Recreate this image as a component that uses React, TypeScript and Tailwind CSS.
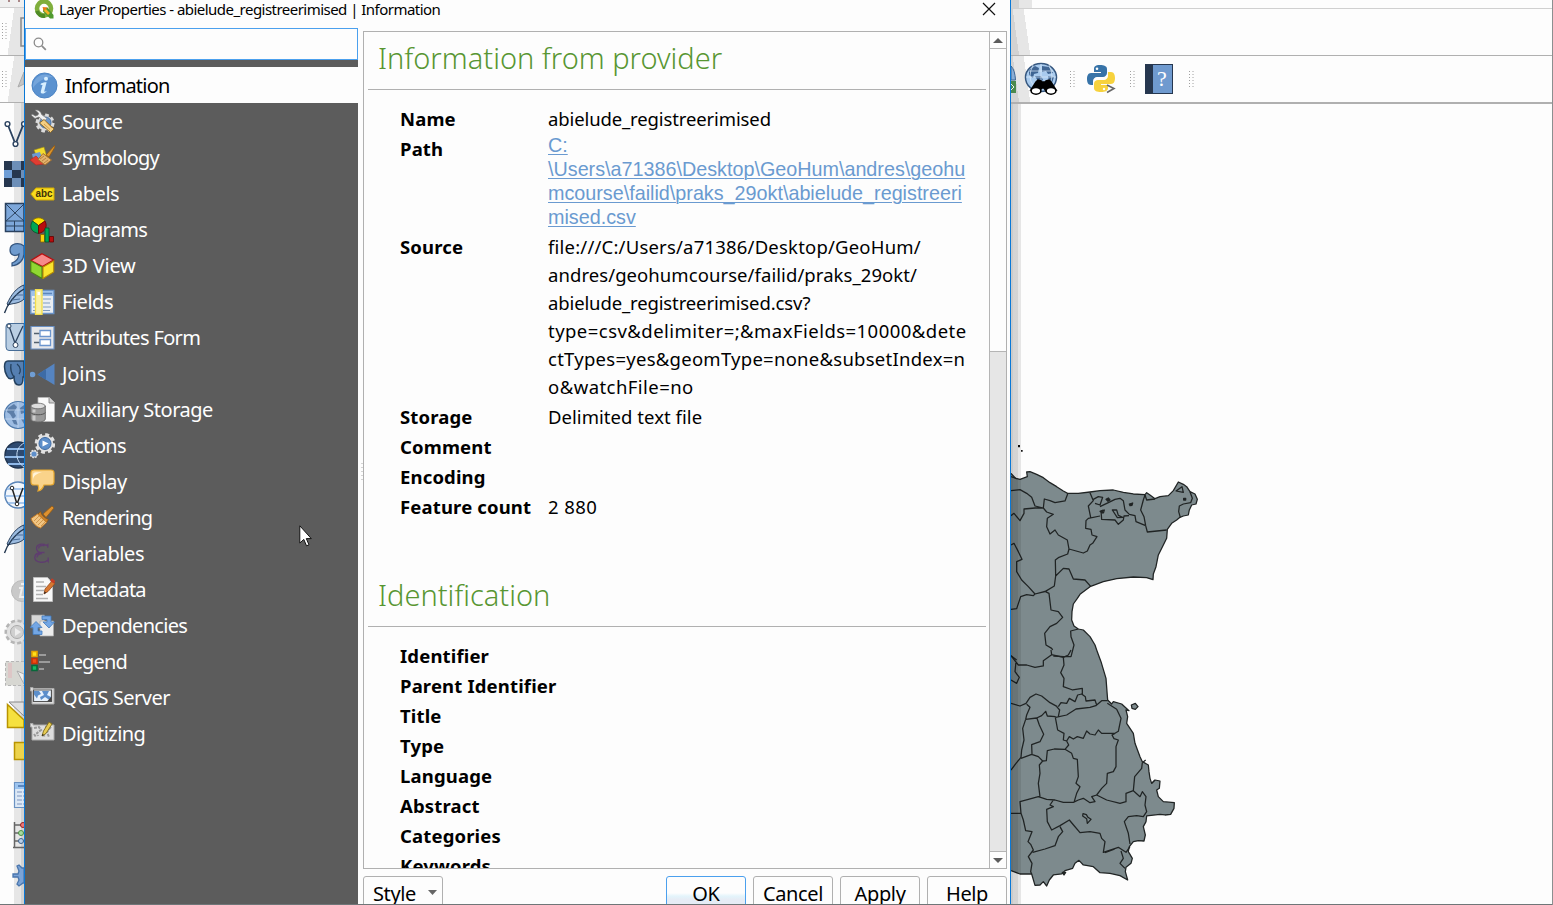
import type { ReactNode } from "react";

/* ---------- sidebar icons ---------- */

const Svg = ({ children, wide }: { children: ReactNode; wide?: boolean }) => (
  <svg viewBox={wide ? "0 0 27 27" : "0 0 25 26"} className={wide ? "h-[27px] w-[27px] shrink-0" : "h-[26px] w-[25px] shrink-0"}>
    {children}
  </svg>
);

const Gear = ({ cx, cy, r, fill = "#e2e2e2", stroke = "#999" }: { cx: number; cy: number; r: number; fill?: string; stroke?: string }) => (
  <g>
    <circle cx={cx} cy={cy} r={r} fill="none" stroke={stroke} strokeWidth={r * 0.5} strokeDasharray={`${r * 0.42} ${r * 0.365}`} />
    <circle cx={cx} cy={cy} r={r * 0.9} fill={fill} stroke={fill} strokeWidth={r * 0.2} />
    <circle cx={cx} cy={cy} r={r * 1.02} fill="none" stroke={fill} strokeWidth={r * 0.42} strokeDasharray={`${r * 0.44} ${r * 0.361}`} />
  </g>
);

const icons: Record<string, ReactNode> = {
  Information: (
    <Svg wide>
      <circle cx="13.5" cy="13.5" r="12.5" fill="#5b92d0" stroke="#4a83c4" />
      <path d="M2 13C3 4 14-1 22 5 14 5 6 10 2 16Z" fill="#8ab4e3" opacity=".55" />
      <circle cx="15" cy="6.8" r="2" fill="#d8efff" />
      <path d="M10 11.5c2-1 4-1.400 5.600-1.300L13.300 19c-.2 1 .8.8 2.500-.3-1 2-3 3-4.700 2.800-1.300-.2-1.600-1.200-1.200-2.600l1.600-6-2-.2Z" fill="#d8efff" />
    </Svg>
  ),
  Source: (
    <Svg>
      <Gear cx={15} cy={14} r={7.6} fill="#dcdcdc" stroke="#aaa" />
      <circle cx="15.500" cy="13.500" r="5.500" fill="#6b96cc" stroke="#49709f" />
      <path d="M1.500 6.500 5 9.500 9 8 14 12.500 17 9.500 11.500 5.500C11 2 8 .5 5 1L8.500 4 8 6 5.500 7 2 5Z" fill="#f0f0f0" stroke="#777" strokeWidth=".7" />
      <path d="m9.500 14 4.500-3.500 10 9.500-3.500 3.500Z" fill="#f4cf83" stroke="#8a6522" strokeWidth=".9" />
      <path d="m14 15 6 5.500m-4-7.500 6 6" stroke="#d29e4b" />
    </Svg>
  ),
  Symbology: (
    <Svg>
      <path d="M4 5 14 2 17 12 8 15Z" fill="#f3dc2d" stroke="#9a8a12" strokeWidth=".6" />
      <path d="m2 9 8-2 3 9-9 2Z" fill="#6d9bd3" />
      <path d="m0 15 6-4 8 8-8 1Z" fill="#e03d32" stroke="#b8251e" strokeWidth=".6" />
      <path d="m16 10 8.500-9.500L25 2l-6 10Z" fill="#d9932c" stroke="#8f5813" strokeWidth=".8" />
      <path d="m13 8.500 8.500 6.500-6.500 5-7-5.500Z" fill="#e3b26d" stroke="#a4702d" />
      <path d="m14 11-4 3m6-1-4 3m6-1-4 3" stroke="#a4702d" strokeWidth=".7" />
    </Svg>
  ),
  Labels: (
    <Svg>
      <path d="M.8 13 6 7H24V19H6Z" fill="#f8dc1e" stroke="#d3aa00" />
      <text x="5.500" y="16.300" fontSize="10.500" fontWeight="700" fontFamily="'Liberation Sans'" textLength="17" lengthAdjust="spacingAndGlyphs" fill="#3d3108">abc</text>
    </Svg>
  ),
  Diagrams: (
    <Svg>
      <path d="M8.500 8.500 2.500 4C5-.2 12-.2 15 4Z" fill="#ffe000" stroke="#806b00" strokeWidth=".8" />
      <path d="M8.500 8.500 2.500 4C-1 10 1 15 8.500 16.500Z" fill="#00a653" stroke="#00512a" strokeWidth=".8" />
      <path d="M8.500 8.500 15 4C18 10 15 15 8.500 16.500Z" fill="#b80d0d" stroke="#600" strokeWidth=".8" />
      <path d="M10.500 17.500h4v7.500h-4Z" fill="#fbd30a" stroke="#8b6400" strokeWidth=".8" />
      <path d="M15 11h4v14h-4Z" fill="#00a653" stroke="#004f28" strokeWidth=".8" />
      <path d="M19.500 19.500h4V25h-4Z" fill="#b80d0d" stroke="#600" strokeWidth=".8" />
    </Svg>
  ),
  "3D View": (
    <Svg>
      <path d="M12 .7 23.500 7 12.500 13.500 1 7.500Z" fill="#f58a8a" stroke="#b90f0f" strokeWidth="1.300" />
      <path d="M.8 8 12 14V25.500L.8 19Z" fill="#8fd832" stroke="#4a8310" strokeWidth="1.100" />
      <path d="M23.700 8 13 14V25.500L23.700 19Z" fill="#f9e42f" stroke="#b88c00" strokeWidth="1.100" />
    </Svg>
  ),
  Fields: (
    <Svg>
      <path d="M.8 1.500h23V24.500H.8Z" fill="#e9eef4" stroke="#6993c9" strokeWidth="1.400" />
      <path d="M1.500 2h21.700v5H1.500Z" fill="#9dc1ec" />
      <path d="M13 4.500h9" stroke="#5b86bd" strokeWidth="1.500" />
      <path d="M3 10h2m-2 4h2m-2 4h2m-2 3.500h2M13 10h8m-8 4h7m-7 4h8m-8 3.500h7" stroke="#7f9bc0" strokeWidth="1.200" />
      <path d="M5.500.7H12V25.300H5.500Z" fill="#faf1a5" stroke="#f3dd4b" strokeWidth="1.300" />
      <path d="M7.500 3h2.500v3H7.500Z" fill="#fff" />
    </Svg>
  ),
  "Attributes Form": (
    <Svg>
      <path d="M1 1.500h23V24H1Z" fill="#e6e7ea" stroke="#6a90c4" strokeWidth="1.200" />
      <path d="M4 8.500h5.500M4 17.500h5.500" stroke="#53616f" strokeWidth="1.700" />
      <path d="M10 5.500h10.500v6H10Zm0 9h10.500v6H10Z" fill="#fff" stroke="#6b95ce" strokeWidth="1.300" />
    </Svg>
  ),
  Joins: (
    <Svg>
      <circle cx="2.500" cy="13.500" r="2.800" fill="#6f9dd3" />
      <path d="M7.500 13.500 24.500 2.500V24Z" fill="#5584c1" />
      <path d="M7.500 13.500 16 8v11Z" fill="#3d6ba6" />
    </Svg>
  ),
  "Auxiliary Storage": (
    <Svg>
      <path d="M8 .5h11.500l5 5V24.500H8Z" fill="#fafafa" stroke="#b9b9b9" strokeWidth=".8" />
      <path d="M19 .5v5.500h5.500" fill="#ccc" stroke="#777" strokeWidth=".8" />
      <path d="M.8 9V22c0 4 14.500 4 14.500 0V9Z" fill="#999" stroke="#666" strokeWidth=".9" />
      <ellipse cx="8" cy="9" rx="7.200" ry="2.800" fill="#ddd" stroke="#666" strokeWidth=".8" />
      <path d="M.8 15.500c1 3 13.500 3 14.500 0" fill="none" stroke="#555" />
      <path d="M4 12.500v3m0 3v5" stroke="#ccc" strokeWidth="3" />
    </Svg>
  ),
  Actions: (
    <Svg>
      <Gear cx={15} cy={10.5} r={8.3} />
      <circle cx="15" cy="10.500" r="6" fill="#5e8fca" stroke="#3e6ba3" />
      <path d="m12.500 7.500 6 3-6 3Z" fill="#fff" />
      <Gear cx={4} cy={21} r={3.5} />
      <circle cx="4" cy="21" r="2.600" fill="#5e8fca" />
    </Svg>
  ),
  Display: (
    <Svg>
      <path d="M4 1h17c2 0 3 1 3 3v9c0 2-1 3-3 3H14c-1 3-3 5.500-6 6 1-2 1-4 0-6H4c-2 0-3-1-3-3V4c0-2 1-3 3-3Z" fill="#fad38a" stroke="#e6a72f" strokeWidth="1.200" />
      <path d="M3 10V6c0-2 1-2.800 3-2.800h6C7 4.500 4 6 3 10Z" fill="#fff4db" />
    </Svg>
  ),
  Rendering: (
    <Svg>
      <path d="m13 9 9-8 2 2-8 9.500Z" fill="#dd9130" stroke="#935a14" strokeWidth=".8" />
      <path d="M10.500 6.500c1 4 5 7 8 8l-2 3-9-8Z" fill="#c98029" stroke="#8a5310" strokeWidth=".7" />
      <path d="m7.500 9 9 8.500-6 5.500c-4-1-8-5-9.500-9.500Z" fill="#f1c583" stroke="#c57a23" />
      <path d="m9 11-5 5m7-3-5 5m7-3-5 5m7-3-4 4" stroke="#c98b3d" strokeWidth=".8" />
    </Svg>
  ),
  Variables: (
    <Svg>
      <path d="M17.800 6.800V3.500L16.500 4.500C12.500 2 6.500 3 6.500 7.200c0 2.800 2.200 4.300 5.500 4.300h2.500M12 11.500C7.500 11.700 4.800 13.500 4.800 16.500c0 5.500 9.500 5.700 12.500 3l.9 1v-4M8.500 7.500c0-2.500 3-3.600 6-2.700M7 16.500c0-2.500 2.500-3.700 5-3.900" fill="none" stroke="#5f3c70" strokeWidth="1.300" />
    </Svg>
  ),
  Metadata: (
    <Svg>
      <path d="M3.500.5h14l5 5.500v18.500H3.500Z" fill="#f8f8f8" stroke="#bdbdbd" />
      <path d="M6 5h8M6 9.500h10M6 13.500h8M6 17.500h7M6 21.500h12" stroke="#b1b1b1" strokeWidth="1.300" />
      <path d="m14 17 1-5 7-8 3 2.500-7 8Z" fill="#d87831" stroke="#91471a" strokeWidth=".8" />
      <path d="m21 2.500 3.500 2.800" stroke="#c43d25" strokeWidth="3" />
      <path d="m14 17 .6-2.500 1.600 1.300Z" fill="#222" />
    </Svg>
  ),
  Dependencies: (
    <Svg>
      <path d="M1.500 2h13v13h-13Z" fill="#d7d7d7" stroke="#999" strokeWidth=".7" />
      <path d="M10 8h13.500V23H10Z" fill="#ececec" stroke="#aaa" strokeWidth=".7" />
      <path d="M12 3h9v6h3.500L19 15l-6-6h4V6.500h-5Z" fill="#73a6e4" stroke="#437bbd" strokeWidth=".8" />
      <path d="M12 21.500H3v-7H0l6-6 6 6H8V18h4Z" fill="#73a6e4" stroke="#437bbd" strokeWidth=".8" />
    </Svg>
  ),
  Legend: (
    <Svg>
      <path d="M9 6h7M9 13h11M9 20h5" stroke="#9b9b9b" strokeWidth="2" />
      <path d="M2 2.500h5v5H2Z" fill="#ffe11c" stroke="#e7a400" strokeWidth="1.600" />
      <path d="M2 9.500h5v5H2Z" fill="#f14d16" stroke="#c93107" strokeWidth="1.600" />
      <path d="M2 16.500h5v5H2Z" fill="#17b765" stroke="#07683a" strokeWidth="1.600" />
    </Svg>
  ),
  "QGIS Server": (
    <Svg>
      <path d="M.5 2.500H3v1h21v15.500H2V6H.500Z" fill="#dedede" stroke="#aaa" />
      <path d="M3.500 5h18v11.500h-18Z" fill="#e9f3fd" stroke="#555" strokeWidth="1.200" />
      <path d="M4 6h5l2 3-3 1.500-1 3-3-4Zm8 0h7l-2 4 4 2v4l-6-4-4 3-1-3 4-2Z" fill="#5c8fcb" />
      <path d="m17 16.500 4.500-5v5Z" fill="#444" />
    </Svg>
  ),
  Digitizing: (
    <Svg>
      <path d="M.5 2.500H3v1.500h21v15H2V6H.500Z" fill="#dedede" stroke="#aaa" />
      <path d="m4 7 5-1 2 3-4 3 1 3m-4-2 2 3m9-10 5 1-3 4 2 5m-7-2 4 1" stroke="#999" strokeWidth="2" fill="none" strokeDasharray="3 1" />
      <path d="m12 15 1.500-5L19 1l3 2-6 9.500Z" fill="#e8cc52" stroke="#7e6b1c" strokeWidth=".9" />
      <path d="m12 15 .5-2 1.500 1Z" fill="#222" />
    </Svg>
  ),
};

const navItems: { name: string; cls: string }[] = [
  { name: "Source", cls: "tracking-[-0.63px]" },
  { name: "Symbology", cls: "tracking-[-0.8px]" },
  { name: "Labels", cls: "tracking-[-0.47px]" },
  { name: "Diagrams", cls: "tracking-[-0.7px]" },
  { name: "3D View", cls: "tracking-[-0.2px]" },
  { name: "Fields", cls: "tracking-[-0.48px]" },
  { name: "Attributes Form", cls: "tracking-[-0.65px]" },
  { name: "Joins", cls: "tracking-[-0.1px]" },
  { name: "Auxiliary Storage", cls: "tracking-[-0.48px]" },
  { name: "Actions", cls: "tracking-[-0.7px]" },
  { name: "Display", cls: "tracking-[-0.5px]" },
  { name: "Rendering", cls: "tracking-[-0.85px]" },
  { name: "Variables", cls: "tracking-[-0.4px]" },
  { name: "Metadata", cls: "tracking-[-0.75px]" },
  { name: "Dependencies", cls: "tracking-[-0.68px]" },
  { name: "Legend", cls: "tracking-[-0.85px]" },
  { name: "QGIS Server", cls: "tracking-[-0.48px]" },
  { name: "Digitizing", cls: "tracking-[-0.55px]" },
];

function Sidebar() {
  return (
    <aside className="flex w-[333px] shrink-0 flex-col bg-[#5c5c5c]">
      <div className="flex h-8 items-center border border-[#4ba0ee] bg-[#fdfdfd] pl-[7px]">
        <svg viewBox="0 0 14 14" className="h-[14px] w-[14px]" fill="none" stroke="#8b8b8b" strokeWidth="1.300">
          <circle cx="5.500" cy="5.500" r="4.300" />
          <path d="m8.800 8.800 4 4" strokeWidth="1.800" />
        </svg>
      </div>
      <div className="mt-[7px] flex h-9 items-center gap-[7px] bg-[#fdfdfd] pl-[6px] text-[20px] text-black">
        {icons.Information}
        <span className="pt-[2px] tracking-[-0.78px]">Information</span>
      </div>
      {navItems.map((n) => (
        <div key={n.name} className="flex h-9 items-center gap-[7px] pl-[5px] pt-[2px] text-[20px] text-white">
          {icons[n.name]}
          <span className={n.cls}>{n.name}</span>
        </div>
      ))}
    </aside>
  );
}

/* ---------- information pane ---------- */

const Row = ({ label, children }: { label: string; children?: ReactNode }) => (
  <div className="flex min-h-[30px] pl-9">
    <div className="w-[148px] shrink-0 whitespace-nowrap font-bold leading-[30px] tracking-[0.15px]">{label}</div>
    <div className="whitespace-nowrap">{children}</div>
  </div>
);

const Heading = ({ children }: { children: ReactNode }) => (
  <h2 className="ml-1 mr-[3px] flex h-[58px] items-center border-b border-[#b0b0b0] pb-[5px] pl-[10px] text-[29px] font-light text-[#589632]">
    {children}
  </h2>
);

const sourceLines = [
  { text: "file:///C:/Users/a71386/Desktop/GeoHum/", cls: "tracking-[0.2px]" },
  { text: "andres/geohumcourse/failid/praks_29okt/", cls: "tracking-[0.07px]" },
  { text: "abielude_registreerimised.csv?", cls: "tracking-[-0.13px]" },
  { text: "type=csv&delimiter=;&maxFields=10000&dete", cls: "tracking-[0.46px]" },
  { text: "ctTypes=yes&geomType=none&subsetIndex=n", cls: "tracking-[0.26px]" },
  { text: "o&watchFile=no", cls: "tracking-[0.45px]" },
];
const pathLines = [
  "C:",
  "\\Users\\a71386\\Desktop\\GeoHum\\andres\\geohu",
  "mcourse\\failid\\praks_29okt\\abielude_registreeri",
  "mised.csv",
];
const identification = ["Identifier", "Parent Identifier", "Title", "Type", "Language", "Abstract", "Categories", "Keywords"];

function Scrollbar() {
  return (
    <div className="flex w-[17px] shrink-0 flex-col border-l border-[#b5b5b5] bg-[#e6e6e6]">
      <div className="flex h-[17px] items-center justify-center border-b border-[#b5b5b5] bg-[#fdfdfd]">
        <svg viewBox="0 0 10 5" className="h-[5px] w-[10px]"><path d="M0 5 5 0l5 5Z" fill="#5c5c5c" /></svg>
      </div>
      <div className="h-[303px] border-b border-[#b5b5b5] bg-[#fdfdfd]" />
      <div className="mt-auto flex h-[17px] items-center justify-center border-t border-[#b5b5b5] bg-[#fdfdfd]">
        <svg viewBox="0 0 10 5" className="h-[5px] w-[10px]"><path d="M0 0h10L5 5Z" fill="#5c5c5c" /></svg>
      </div>
    </div>
  );
}

function InfoPane() {
  return (
    <div className="mt-[3px] flex h-[838px] w-[644px] overflow-hidden border border-[#b0b0b0] text-[18.500px] text-black">
      <div className="min-w-0 flex-1">
        <Heading>Information from provider</Heading>
        <div className="pt-[14px]">
          <Row label="Name"><div className="leading-[30px] tracking-[-0.12px]">abielude_registreerimised</div></Row>
          <Row label="Path">
            <div className="-mt-px mb-[3px] font-['Liberation_Sans',sans-serif] text-[19.750px] leading-6 text-[#6a9ad0] underline decoration-1 underline-offset-2">
              {pathLines.map((l) => <div key={l}>{l}</div>)}
            </div>
          </Row>
          <Row label="Source">
            <div className="pb-px pt-px leading-7">{sourceLines.map((l) => <div key={l.text} className={l.cls}>{l.text}</div>)}</div>
          </Row>
          <Row label="Storage"><div className="leading-[30px] tracking-[0.05px]">Delimited text file</div></Row>
          <Row label="Comment" />
          <Row label="Encoding" />
          <Row label="Feature count"><div className="leading-[30px] tracking-[0.4px]">2 880</div></Row>
        </div>
        <div className="mt-[47px]"><Heading>Identification</Heading></div>
        <div className="pt-[14px]">{identification.map((l) => <Row key={l} label={l} />)}</div>
      </div>
      <Scrollbar />
    </div>
  );
}

const buttonBase = "flex h-[34px] w-20 items-center justify-center rounded-[3px] border pt-[2px] text-[20px] tracking-[-0.35px] text-black";

function Footer() {
  return (
    <div className="mt-[7px] flex h-[28px] w-[644px] gap-[7px] overflow-hidden">
      <button className={`${buttonBase} mr-auto gap-3 border-[#b0b0b0] pl-1`}>
        Style
        <svg viewBox="0 0 9 5" className="-mt-[3px] h-[5px] w-[9px]"><path d="M0 0h9L4.500 5Z" fill="#666" /></svg>
      </button>
      <button className={`${buttonBase} border-[#4ba0ee] bg-linear-to-b from-[#fdfdfd] from-50% via-[#e3f4fb] via-60% to-[#e6ecf5] to-70%`}>OK</button>
      <button className={`${buttonBase} border-[#b0b0b0]`}>Cancel</button>
      <button className={`${buttonBase} border-[#b0b0b0]`}>Apply</button>
      <button className={`${buttonBase} border-[#b0b0b0]`}>Help</button>
    </div>
  );
}

function Dialog() {
  return (
    <section className="relative flex h-full w-[987px] shrink-0 flex-col border-x border-[#0a78d6] bg-[#fdfdfd]">
      <header className="flex h-[28px] shrink-0 items-start pl-[9px] text-[15px] text-black">
        <svg viewBox="0 0 20 20" className="-mt-[1px] h-5 w-5">
          <circle cx="10" cy="9.500" r="7" fill="none" stroke="#7fae3c" strokeWidth="4.600" />
          <path d="M3 12a7 7 0 0 0 8 4.800" fill="none" stroke="#4f8b26" strokeWidth="4" />
          <path d="m9.500 9 4-.5 6 7.500v3.500h-3.500L9 12.500Z" fill="#4f9a2e" />
          <path d="m8.500 8 5 .5L10 12.500Z" fill="#ee7913" />
          <path d="m11 11 4 4" stroke="#f3b229" strokeWidth="2.600" />
        </svg>
        <span className="ml-[5px] leading-[19px] tracking-[-0.53px]">Layer Properties - abielude_registreerimised | Information</span>
        <svg viewBox="0 0 14 14" className="ml-auto mr-[14px] mt-[2px] h-[14px] w-[14px]">
          <path d="m1 1 12 12M13 1 1 13" stroke="#111" strokeWidth="1.200" />
        </svg>
      </header>
      <div className="flex min-h-0 flex-1">
        <Sidebar />
        <div className="ml-[5px] flex flex-col">
          <InfoPane />
          <Footer />
        </div>
      </div>
      <svg viewBox="0 0 4 18" className="absolute left-[335px] top-[463px] h-[18px] w-1">
        <path d="M2 0v18" stroke="#aaa" strokeDasharray="1 3" />
      </svg>
      <svg viewBox="0 0 13 22" className="absolute left-[274px] top-[525px] h-[22px] w-[13px]">
        <path d="M.8.8V18l4-3.600L7.500 20.800l2.500-1-2.700-6.200h5Z" fill="#fff" stroke="#111" />
      </svg>
    </section>
  );
}

/* ---------- left tool strip: each cell shows its own slice of the column ---------- */

const Cell = ({ y, h = 40, children }: { y: number; h?: number; children?: ReactNode }) => (
  <svg viewBox={`0 ${y} 24 ${h}`} className={h === 40 ? "h-10 w-6 shrink-0" : "h-[41px] w-6 shrink-0"}>{children}</svg>
);
const Feather = ({ y }: { y: number }) => (
  <g>
    <path d={`M7 ${y + 19}C11 ${y + 10} 16 ${y + 3} 24 ${y}V${y + 14}C19 ${y + 19} 13 ${y + 18} 8 ${y + 20}Z`} fill="#9bbbe0" stroke="#2b425f" />
    <path d={`M4.500 ${y + 28}C7 ${y + 20} 15 ${y + 9} 24 ${y + 4}`} fill="none" stroke="#22364f" strokeWidth="1.400" />
    <path d={`M12 ${y + 15}l8-1M16 ${y + 10}l7 0`} fill="none" stroke="#4a6d98" />
  </g>
);

const Grip = () => (
  <svg viewBox="0 0 5 17" className="h-[17px] w-[5px] shrink-0">
    <path d="M.5 0v17M4 0v17" stroke="#a0a0a0" strokeDasharray="1 2" />
  </svg>
);

function LeftStrip() {
  return (
    <div className="relative flex h-full w-6 shrink-0 flex-col overflow-hidden bg-[linear-gradient(90deg,#fdfdfd_14px,#e6e6e6_14px,#e6e6e6_21px,#d2d2d2_21px)]">
      <div className="h-2 border-b border-[#d0d0d0] bg-[#f0f0f0]">
        <svg viewBox="0 0 24 8" className="h-2 w-6"><path d="M9 0v2M19 0v2" stroke="#a88" strokeWidth="2" /></svg>
      </div>
      <div className="flex h-12 items-center border-b border-[#b0b0b0] bg-[linear-gradient(98deg,#fdfdfd_14px,#e6e6e6_14px)] pl-[2px]">
        <Grip />
        <svg viewBox="0 0 4 30" className="ml-auto h-[30px] w-1"><path d="M4 1H1v28h3" fill="none" stroke="#888" strokeWidth="1.500" /></svg>
      </div>
      <div className="flex h-[47px] items-center border-b border-[#b0b0b0] bg-[linear-gradient(98deg,#fdfdfd_14px,#e6e6e6_14px)] pl-[2px]">
        <Grip />
        <svg viewBox="0 0 7 20" className="ml-auto h-5 w-[7px]"><path d="M1 18 7 3v12Z" fill="#c5c5c5" stroke="#aaa" /></svg>
      </div>
      <div className="h-[11px] shrink-0" />
      <Cell y={114}>
        <path d="m7.500 124 8 20 8-20" fill="none" stroke="#2b425f" strokeWidth="1.800" />
        <g fill="#fdfdfd" stroke="#2b425f" strokeWidth="1.400"><circle cx="7.500" cy="124" r="2.400" /><circle cx="15.500" cy="144" r="2.400" /><circle cx="24" cy="124" r="2.400" /></g>
      </Cell>
      <Cell y={154}>
        <path d="M4 161h20v26H4Z" fill="#6d8fb8" />
        <path d="M4 161h8v9H4Zm8 9h9v8h-9Zm-8 8h8v9H4Zm17-17h3v9h-3Zm0 17h3v9h-3Z" fill="#26374f" />
        <path d="M4 170h8v8H4Z" fill="#6f9ed6" />
      </Cell>
      <Cell y={194}>
        <path d="M5.500 203.500H24v28H5.500Z" fill="#7da7da" stroke="#2b425f" strokeWidth="1.500" />
        <path d="m6 204 9 9 9-9M15 213l-9 8h18ZM14.500 221v10M6 226h18" fill="none" stroke="#2b425f" />
      </Cell>
      <Cell y={234}>
        <path d="M24 246c-5-4-14-3-14 4 0 5 5 7 9 4 0 4-2 7-7 9v3c7-1 12-6 12-13Z" fill="#6f9bce" stroke="#34557f" strokeWidth="1.200" />
      </Cell>
      <Cell y={274}><Feather y={285} /></Cell>
      <Cell y={314}>
        <path d="M24 323.500H9q-3 0-3 3V347q0 3.500 3 3.500h15Z" fill="#b9cee3" stroke="#476d97" />
        <path d="m9 326 6 17 8-17" fill="none" stroke="#2b425f" strokeWidth="1.300" />
        <circle cx="9" cy="326" r="2" fill="#fff" stroke="#2b425f" /><circle cx="15.500" cy="345" r="2.500" fill="#fff" stroke="#2b425f" />
      </Cell>
      <Cell y={354}>
        <path d="M24 361H8c-5 0-4 10-1 15 2 4 5 3 7 1 0 5 2 8 5 8s4-2 4-8h1Z" fill="#557fb1" stroke="#24415f" strokeWidth="1.500" />
        <path d="M11 364c-1 6 0 9 3 13m3-13c4 3 4 8 2 10" stroke="#24415f" fill="none" strokeWidth="1.300" />
      </Cell>
      <Cell y={394}>
        <circle cx="18" cy="415" r="13.500" fill="#9dbce2" stroke="#4e79ab" strokeWidth="1.200" />
        <path d="m8 408 6-4 3 3-3 5 2 4-3 3-3-5-3-2Zm12 0 4-3v8l-3 1Zm-8 12h4l2 5-4-1Zm9-1h3v5Z" fill="#5c7ea9" />
        <path d="M5 410h19M5 419h19M18 402v26" stroke="#c8dbf0" strokeWidth=".7" />
      </Cell>
      <Cell y={434}>
        <circle cx="18" cy="455" r="13" fill="#2e4a70" stroke="#20344f" strokeWidth="1.500" />
        <path d="M7 449h17M5 457h19M8 464h16" stroke="#8fb8e8" strokeWidth="2" />
        <path d="M24 443c-9 5-10 17 0 24" fill="none" stroke="#c5dcf5" />
      </Cell>
      <Cell y={474}>
        <circle cx="18" cy="495" r="13" fill="#f1f6fc" stroke="#5a85b8" strokeWidth="1.500" />
        <path d="M7 489h17M5 496h19M8 503h16" stroke="#8fb8e8" strokeWidth="1.500" />
        <path d="m12 488 5 16 6-16" fill="none" stroke="#222" strokeWidth="1.500" />
        <circle cx="12" cy="488" r="1.800" fill="#fff" stroke="#222" /><circle cx="17" cy="504" r="1.800" fill="#fff" stroke="#222" />
      </Cell>
      <Cell y={514}><Feather y={525} /></Cell>
      <div className="h-[16px] shrink-0" />
      <Cell y={570} h={41}>
        <circle cx="22" cy="591" r="10.500" fill="#c9c9c9" stroke="#bbb" />
        <path d="M24 584h-3m-2 4h3l-2 9h4" fill="none" stroke="#eee" strokeWidth="2" />
      </Cell>
      <Cell y={611} h={41}>
        <circle cx="17" cy="632" r="11" fill="#ddd" stroke="#b5b5b5" strokeWidth="3" strokeDasharray="4 2.500" />
        <circle cx="17" cy="632" r="10" fill="#e2e2e2" /><circle cx="17" cy="632" r="6.500" fill="#d0d0d0" stroke="#aaa" />
        <path d="m15 628 6 4-6 4Z" fill="#eee" />
      </Cell>
      <Cell y={652} h={41}>
        <path d="M24 661.500H5.500v24H24" fill="#d7d7d2" stroke="#b5b5b5" strokeDasharray="3 2" />
        <path d="M10 663v15" stroke="#ddc6c6" strokeWidth="4" /><path d="m17 671 7 3v10Z" fill="#eee" stroke="#aaa" />
      </Cell>
      <Cell y={693} h={41}>
        <path d="M7.500 704.500 24 720v7.500H7.500Z" fill="#f6e13f" stroke="#b99400" strokeWidth="1.500" />
        <path d="M9 702h15v14Z" fill="#dfdfdf" stroke="#888" />
      </Cell>
      <Cell y={734} h={41}><path d="M25 742.500H14.500v17H25Z" fill="#ecd34c" stroke="#b99400" strokeWidth="1.500" /></Cell>
      <Cell y={775} h={41}>
        <path d="M25 782.500H14.500v25H25Z" fill="#dce8f5" stroke="#6b92c2" strokeWidth="1.200" />
        <path d="M15 783h9v6h-9Z" fill="#9cc4ef" /><path d="M18 786h6" stroke="#5b86bd" strokeWidth="2" />
        <path d="M17 792h7m-7 4h7m-7 4h7m-7 4h7" stroke="#7f95c0" strokeDasharray="5 1" />
      </Cell>
      <Cell y={816} h={41}>
        <path d="M14.500 822v26M15 825h9m-9 8h9m-9 8h9M13 847.500h11" fill="none" stroke="#666" strokeWidth="1.500" />
        <circle cx="23" cy="825" r="2.500" fill="#e77" stroke="#9a2222" /><circle cx="21" cy="833" r="2.500" fill="#a6dba0" stroke="#4d8f45" /><circle cx="21" cy="841" r="2.500" fill="#b8cfe8" stroke="#41638c" />
      </Cell>
      <Cell y={857} h={41}>
        <path d="M24 868h-2l-3-3-2 1 2 5-1 3h-5v3h5l1 3-2 4 2 2 4-3h1Z" fill="#7ba3d6" stroke="#4a76ad" strokeWidth="1.300" />
      </Cell>
    </div>
  );
}

/* ---------- right side: toolbars and map canvas ---------- */

function TopBars() {
  return (
    <>
      <div className="h-[9px] border-b border-[#d0d0d0] bg-[linear-gradient(90deg,#d2d2d2_8px,#e6e6e6_8px,#e6e6e6_21px,#fdfdfd_21px)]" />
      <div className="h-[47px] border-b border-[#b0b0b0] bg-[linear-gradient(82deg,#d2d2d2_8px,#e6e6e6_8px,#e6e6e6_19px,#fdfdfd_19px)]" />
      <div className="flex h-[48px] items-center border-b-2 border-[#b0b0b0] bg-[linear-gradient(82deg,#d2d2d2_8px,#e6e6e6_8px,#e6e6e6_19px,#fdfdfd_19px)]">
        <svg viewBox="0 0 5 30" className="h-[30px] w-[5px]">
          <path d="M0 2q4 4 4.500 14H0Z" fill="#8aaed6" stroke="#3d6694" /><path d="M0 17h5v12H0Z" fill="#4d8a4d" /><path d="m0 20 3 3-3 3" stroke="#eee" fill="none" />
        </svg>
        <svg viewBox="0 0 34 34" className="ml-[8px] h-[34px] w-[34px]">
          <ellipse cx="17" cy="15.500" rx="15.500" ry="14" fill="#a9cbee" stroke="#36577f" strokeWidth="1.500" />
          <path d="M5 8l6-4 4 2-1 5-4 1-1 4-4-3Zm13-4 7 1 4 6-5 1-2-3-4 1Zm-7 10 6 0 2 4-4 3Zm13 0 6 1-2 6-3-1Z" fill="#3f6593" />
          <path d="M2 15h30M5 9h24M17 2v26M9 3q-6 12 0 20M25 3q6 12 0 20" fill="none" stroke="#dcecfb" strokeWidth=".7" />
          <path d="m7 28 5-8 2-2 3 1 1 1h3l1-1 3-1 2 2 5 8-5-1-5 2-2-3-2 0-3 3-3-2Z" fill="#000" stroke="#000" strokeWidth="1.500" />
          <ellipse cx="12" cy="28.800" rx="4.900" ry="3.400" fill="#fff" stroke="#000" strokeWidth="1.600" /><ellipse cx="27" cy="28.800" rx="4.900" ry="3.400" fill="#fff" stroke="#000" strokeWidth="1.600" />
        </svg>
        <div className="ml-[12px]"><Grip /></div>
        <svg viewBox="0 0 30 30" className="ml-[11px] h-[30px] w-[30px]">
          <path d="M14 1c-5 0-6 2-6 4v3h7v1H5c-3 0-4 3-4 6s1 6 4 6h2v-4c0-2 2-4 4-4h6c2 0 4-2 4-4V5c0-3-3-4-7-4Z" fill="#3773a8" />
          <circle cx="11" cy="4.700" r="1.300" fill="#fff" />
          <path d="M22 8v4c0 2-2 4-4 4h-6c-2 0-4 1-4 4v4c0 3 3 4 7 4s7-1 7-4v-3h-7v-1h10c3 0 4-3 4-6s-1-6-4-6Z" fill="#f7d23d" />
          <circle cx="18" cy="25" r="1.200" fill="#fff" /><path d="m21 21 7 3.500-7 4" fill="none" stroke="#666" strokeWidth="1.600" />
        </svg>
        <div className="ml-[14px]"><Grip /></div>
        <div className="ml-[10px] flex h-[30px] w-7 items-center border border-[#26374f] bg-[#6f9acf] font-['Liberation_Serif',serif] text-[22px] leading-none text-white">
          <span className="mr-[4px] h-full w-[7px] bg-[#26374f]" />?
        </div>
        <div className="ml-[16px]"><Grip /></div>
      </div>
    </>
  );
}

const coastNorth =
  "33,130 47,145 60,148 82,140 80,126 90,125 110,133 130,143 150,158 170,170 190,183 203,190 235,190 270,186 300,182 340,180 370,187 400,192 435,194 440,188 450,195 465,206 480,200 505,197 520,182 535,156 550,163 560,170 570,185 585,192 592,208 588,222 575,225 568,240 565,255 550,258 540,262 530,270 515,280 502,298 500,325 490,345 475,375 468,410 460,432 459,449 440,443 400,441 350,446 310,455 272,469 240,493 232,505 220,522 216,545 215,570 222,588 235,597 250,600 270,620 285,645 290,660";
const coastSouth =
  "290,0 303,35 318,85 321,125 323,150 335,162 340,155 365,162 387,182 378,180 383,200 380,220 400,250 405,280 420,320 427,335 445,345 447,365 450,385 455,400 465,390 480,393 478,415 470,420 475,440 490,455 523,458 522,475 512,493 495,495 480,493 440,498 438,515 430,530 436,555 432,573 415,572 400,575 388,590 385,605 397,625 393,640 378,652 376,665 383,690 360,677 330,670 300,668 280,650 250,645 237,631 225,640 218,655 195,662 185,672 160,675 148,690 140,708 130,695 120,705 105,706 95,672 60,672 33,662";

function MapCanvas() {
  return (
    <svg viewBox="1011 104 542 801" className="block h-[801px] w-[542px]">
      <g transform="translate(1000 430) scale(.33333)" fill="none" stroke="#202424" strokeWidth="3.800" strokeLinejoin="round">
        <polygon points={`${coastNorth} 290,664 33,664`} fill="#7d8a8d" stroke="none" />
        <g transform="translate(0 660)">
          <polygon points={`33,0 ${coastSouth}`} fill="#7d8a8d" stroke="none" />
          <polyline points={coastSouth} />
          <path d="M33,160 60,168 78,160 90,142 108,132 125,138 150,158 172,170 M175,170 183,158 200,160 208,145 225,155 233,135 245,132 256,140 258,153 285,150 290,165 305,152 323,152 M80,163 90,172 80,195 77,208 M77,208 110,204 125,197 137,184 142,198 167,200 M170,170 179,180 175,200 M167,202 200,195 228,177 270,172 290,166 M77,208 68,235 72,270 65,300 63,322 48,340 33,360 M111,205 118,225 131,253 120,275 95,284 96,313 M63,325 95,313 115,320 128,333 139,332 142,302 163,297 195,298 206,285 200,273 190,270 192,250 173,240 166,202 M200,273 208,260 220,267 232,260 250,265 260,243 270,252 285,255 295,240 305,250 345,250 355,244 363,205 350,178 322,160 M345,250 336,255 342,266 355,270 348,290 348,350 340,365 322,370 320,400 305,415 290,435 320,450 360,460 378,455 378,430 400,422 404,380 425,355 427,338 M195,298 215,310 220,325 232,328 235,380 228,400 240,410 230,430 222,457 M128,333 118,345 120,370 115,400 120,440 M63,490 60,455 85,448 115,440 140,448 165,450 190,457 220,457 235,450 250,445 270,458 285,455 275,440 290,435 M33,490 63,490 70,510 77,542 96,545 84,575 92,583 100,600 85,620 96,640 92,665 95,672 M98,607 135,597 165,587 175,560 188,545 180,530 M160,450 150,465 160,470 140,478 142,515 155,540 180,527 208,510 218,522 240,548 270,545 300,550 305,565 315,575 310,607 355,592 378,607 390,590 M315,608 345,597 M400,422 420,440 427,425 438,440 435,465 440,485 430,500 410,497 385,500 373,515 385,550 390,582 M363,603 370,625 360,640 375,655 M153,0 155,14 130,32 130,48 105,52 80,45 55,45 33,17 M155,14 190,22 205,15 213,0 M190,22 192,45 182,68 192,85 190,110 218,120 247,115 247,132 M48,35 45,65 58,82 50,100 33,90" />
          <path d="m249 491 10 3 5 8 9 6-11 12-2-14-12-8ZM394 165l12-5 8 10-8 8-10-3ZM455 400l8-8M427 338l10-8" fill="#7d8a8d" />
          <path d="m187 667 10 0-5 8Z" fill="#202424" />
        </g>
        <polyline points={coastNorth} />
        <path d="M33,182 60,179 80,190 95,202 105,228 130,234 133,207 150,212 165,218 195,213 203,192 M33,257 42,250 60,272 72,250 72,237 105,234 130,234 140,246 160,253 142,265 140,290 150,312 165,300 175,315 202,330 207,357 M207,357 250,369 262,363 270,345 278,340 291,320 276,315 273,298 257,295 258,272 265,265 300,258 M207,357 203,372 175,383 166,390 167,438 163,468 135,485 105,492 85,470 65,450 50,425 50,395 66,388 55,365 42,340 33,345 M167,438 190,415 207,417 220,447 255,450 272,469 M33,538 50,536 62,500 80,494 100,497 105,492 135,484 147,490 153,540 175,545 188,562 170,580 150,590 134,610 138,645 155,655 158,660 M235,597 212,603 213,620 222,645 213,680 190,680 160,678 M270,188 280,212 265,228 272,262 M280,208 295,200 308,202 300,225 285,220 M300,230 325,218 345,208 360,205 370,212 375,240 388,253 405,257 408,275 437,287 442,306 500,300 M303,242 305,268 345,270 355,283 370,270 372,258 387,257 M305,242 313,240 310,250 M337,240 350,240 355,256 368,262 352,263Z M437,287 432,260 422,240 430,210 435,195 M435,195 440,210 465,207 M528,183 546,170 550,187Z M570,185 577,205 572,218 550,222 538,228 536,245 541,262" />
        <path d="m318 208 7-4 5 6-6 4ZM388 222l10-3-2 7-6 1ZM551 205h6v5h-6ZM300 244l9-3-2 8Z" fill="#202424" />
        <path d="M33,140 50,146M33,677 50,690" />
        <path d="M54 45h6v7h-6ZM63 60h5v5h-5Z" fill="#111" stroke="none" />
      </g>
    </svg>
  );
}

export default function App() {
  return (
    <main className="relative flex h-[905px] w-[1553px] overflow-hidden bg-[#fdfdfd] font-['Noto_Sans',sans-serif]">
      <LeftStrip />
      <Dialog />
      <div className="relative min-w-0 flex-1 overflow-hidden">
        <TopBars />
        <MapCanvas />
        <div className="absolute bottom-0 left-0 top-[104px] w-[10px] bg-[linear-gradient(90deg,rgba(0,0,0,0.2)_2px,rgba(0,0,0,0.16)_2px,rgba(0,0,0,0.16)_7px,rgba(0,0,0,0.09)_7px)]" />
      </div>
      <div className="absolute bottom-0 left-0 h-px w-full bg-[#6f7678]" />
      <div className="absolute right-0 top-0 h-full w-px bg-[#8b8f90]" />
    </main>
  );
}
